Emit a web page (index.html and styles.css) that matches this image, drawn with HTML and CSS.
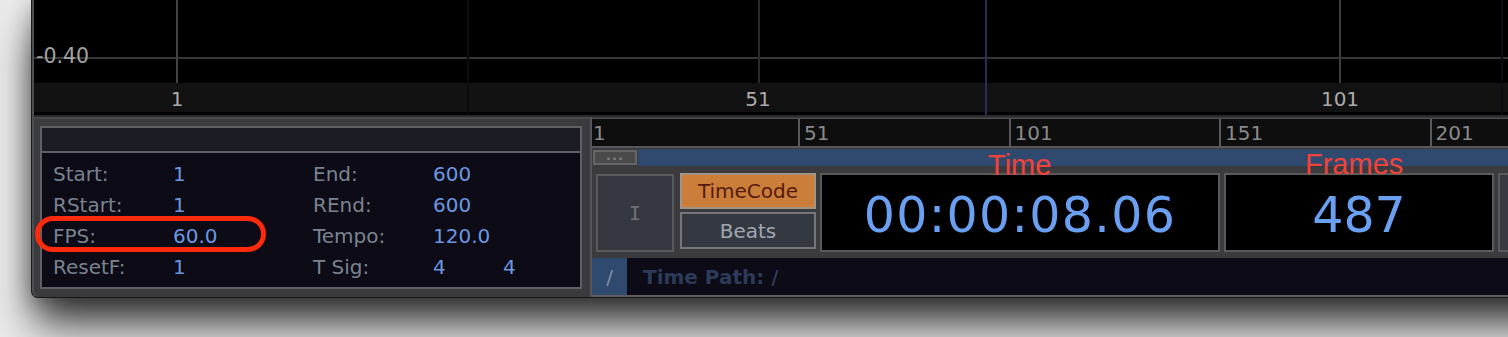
FILE: index.html
```html
<!DOCTYPE html>
<html>
<head>
<meta charset="utf-8">
<title>Timeline</title>
<link rel="stylesheet" href="styles.css">
</head>
<body>
<div class="window">
  <div class="graph">
    <div class="plot">
      <svg class="grid" width="1480" height="83" viewBox="0 0 1480 83">
        <line x1="0" y1="58" x2="1480" y2="58" stroke="#373737" stroke-width="2"/>
        <line x1="143" y1="0" x2="143" y2="83" stroke="#444444" stroke-width="2"/>
        <line x1="725" y1="0" x2="725" y2="83" stroke="#2a2a2a" stroke-width="2"/>
        <line x1="1306" y1="0" x2="1306" y2="83" stroke="#3e3e3e" stroke-width="2"/>
      </svg>
      <span class="ylabel">-0.40</span>
    </div>
    <div class="ruler">
      <span class="tick tick-1">1</span>
      <span class="tick tick-51">51</span>
      <span class="tick tick-101">101</span>
    </div>
    <span class="faint faint-a"></span>
    <span class="faint faint-b"></span>
    <span class="cursor"></span>
  </div>

  <div class="lower">
    <div class="settings">
      <div class="box">
        <div class="box-head"></div>
        <div class="fields">
          <span class="lbl">Start:</span><span class="val">1</span><span class="lbl">End:</span><span class="val">600</span><span></span>
          <span class="lbl">RStart:</span><span class="val">1</span><span class="lbl">REnd:</span><span class="val">600</span><span></span>
          <span class="lbl">FPS:</span><span class="val">60.0</span><span class="lbl">Tempo:</span><span class="val">120.0</span><span></span>
          <span class="lbl">ResetF:</span><span class="val">1</span><span class="lbl">T Sig:</span><span class="val">4</span><span class="val">4</span>
        </div>
      </div>
      <div class="ring"></div>
    </div>

    <div class="timeline">
      <div class="tl-ruler">
        <span class="cell">1</span>
        <span class="cell">51</span>
        <span class="cell">101</span>
        <span class="cell">151</span>
        <span class="cell">201</span>
      </div>
      <div class="range">
        <span class="more">...</span>
        <span class="range-bar"></span>
      </div>
      <div class="controls">
        <div class="ibtn">I</div>
        <div class="modes">
          <div class="mode active">TimeCode</div>
          <div class="mode">Beats</div>
        </div>
        <div class="display time">00:00:08.06</div>
        <div class="display frames">487</div>
        <div class="extra"></div>
      </div>
      <div class="path">
        <span class="root">/</span>
        <span class="path-text">Time Path: /</span>
      </div>
      <span class="note note-time">Time</span>
      <span class="note note-frames">Frames</span>
    </div>
  </div>
</div>
</body>
</html>
```
FILE: styles.css
```css
* { box-sizing: border-box; }
html, body { margin: 0; padding: 0; }
body {
  width: 1508px;
  height: 337px;
  overflow: hidden;
  background: #eaeaea;
  font-family: "DejaVu Sans", sans-serif;
}

.window {
  margin-left: 31px;
  width: 1540px;
  height: 298px;
  background: #3b3b3f;
  border-left: 1px solid #1c1c1c;
  border-bottom: 1px solid #151515;
  border-bottom-left-radius: 7px;
  padding-left: 2px;
  box-shadow: inset 2px 0 0 #4e4e52, 0 30px 42px -4px rgba(0,0,0,.75), 0 4px 22px rgba(0,0,0,.3);
  display: flex;
  flex-direction: column;
  overflow: hidden;
}

/* ---------- graph ---------- */
.graph {
  position: relative;
  height: 117px;
  flex: none;
  background: #000;
  border-bottom: 2px solid #2a2a2e;
}
.plot { position: relative; height: 83px; }
.grid { display: block; }
.ylabel {
  position: absolute;
  left: 2px;
  top: 46px;
  font-size: 20.5px;
  line-height: 20px;
  color: #a2a2a2;
}
.ruler { position: relative; height: 29px; background: #121212; }
.tick {
  position: absolute;
  top: 6px;
  transform: translateX(-50%);
  font-size: 20px;
  line-height: 20px;
  color: #ababab;
}
.tick-1 { left: 143px; }
.tick-51 { left: 724px; }
.tick-101 { left: 1306px; }
.faint {
  position: absolute;
  top: 0;
  width: 2px;
  height: 115px;
  background: #0a0a10;
}
.faint-a { left: 433px; }
.faint-b { left: 1467px; }
.cursor {
  position: absolute;
  left: 951px;
  top: 0;
  width: 2px;
  height: 115px;
  background: #2c2c58;
}

/* ---------- lower ---------- */
.lower { display: flex; height: 180px; flex: none; }

.settings {
  position: relative;
  width: 556px;
  flex: none;
  border-top: 2px solid #4a4a4e;
  padding: 7px 8px 8px 6px;
}
.box {
  height: 163px;
  border: 2px solid #5f5f66;
  background: #0c0b16;
  display: flex;
  flex-direction: column;
}
.box-head {
  height: 25px;
  flex: none;
  background: #1c1c25;
  border-bottom: 2px solid #5f5f66;
}
.fields {
  display: grid;
  grid-template-columns: 120px 140px 120px 70px auto;
  grid-auto-rows: 31px;
  padding: 6px 0 0 11px;
  font-size: 20px;
  line-height: 31px;
}
.lbl { color: #7a8391; }
.val { color: #6b97e2; }
.ring {
  position: absolute;
  left: 1px;
  top: 97px;
  width: 231px;
  height: 36px;
  border: 5px solid #ff2a0c;
  border-radius: 18px;
}

/* ---------- timeline ---------- */
.timeline {
  position: relative;
  flex: 1;
  border-left: 2px solid #55555a;
  padding-top: 1px;
  display: flex;
  flex-direction: column;
}
.tl-ruler {
  height: 30px;
  flex: none;
  display: flex;
  background: #0e0e0e;
  border-top: 1px solid #4e4e52;
  border-bottom: 2px solid #58585c;
}
.cell {
  flex: none;
  width: 210.5px;
  border-left: 2px solid #5a5a5e;
  padding: 4px 0 0 4px;
  font-size: 20px;
  line-height: 20px;
  color: #8a8a8a;
}
.cell:first-child { width: 206px; border-left: none; padding-left: 1px; }

.range {
  height: 19px;
  flex: none;
  display: flex;
  align-items: center;
  gap: 1px;
}
.more {
  margin-left: 1px;
  width: 44px;
  height: 15px;
  background: #4a4a4a;
  border: 2px solid #666;
  color: #808080;
  font-size: 13px;
  font-weight: bold;
  line-height: 7px;
  letter-spacing: 1px;
  text-align: center;
}
.range-bar { flex: 1; height: 17px; background: #30496f; }

.controls {
  height: 79px;
  flex: none;
  margin-top: 6px;
  padding-left: 4px;
  display: flex;
}
.ibtn {
  flex: none;
  width: 78px;
  height: 78px;
  margin-top: 1px;
  border: 2px solid #5a5a5e;
  background: #353840;
  color: #707075;
  font-family: "DejaVu Sans Mono", monospace;
  font-size: 20px;
  display: flex;
  align-items: center;
  justify-content: center;
}
.modes {
  flex: none;
  width: 136px;
  margin-left: 6px;
  display: flex;
  flex-direction: column;
}
.mode {
  height: 37px;
  border: 2px solid #77777b;
  background: #343840;
  color: #a0a8b4;
  font-size: 20px;
  display: flex;
  align-items: center;
  justify-content: center;
}
.mode.active {
  height: 36px;
  border-color: #a39584;
  background: #cb7e3a;
  color: #561a0c;
}
.mode + .mode { margin-top: 3px; }
.display {
  flex: none;
  margin-left: 4px;
  height: 79px;
  border: 2px solid #5a5a5a;
  background: #000;
  color: #6aa0f2;
  font-size: 49px;
  line-height: 69px;
  padding-top: 6px;
  text-align: center;
}
.time { width: 400px; letter-spacing: 1.3px; }
.frames { width: 270px; }
.extra {
  flex: none;
  margin-left: 4px;
  width: 100px;
  border: 2px solid #5a5a5e;
  background: #383a42;
}

.path {
  height: 39px;
  flex: none;
  margin-top: 6px;
  background: #0c0b16;
  border-bottom: 2px solid #5e5e62;
  display: flex;
  align-items: center;
}
.root {
  align-self: stretch;
  width: 35px;
  background: #30496f;
  color: #7f8eac;
  font-size: 20px;
  display: flex;
  align-items: center;
  justify-content: center;
}
.path-text {
  margin-left: 16px;
  font-weight: bold;
  font-size: 20px;
  color: #2c3b5a;
}

.note {
  position: absolute;
  font-family: "Liberation Sans", Arial, sans-serif;
  font-size: 29px;
  line-height: 29px;
  color: #f3423a;
}
.note-time { left: 396px; top: 34px; }
.note-frames { left: 713px; top: 33px; }
```
